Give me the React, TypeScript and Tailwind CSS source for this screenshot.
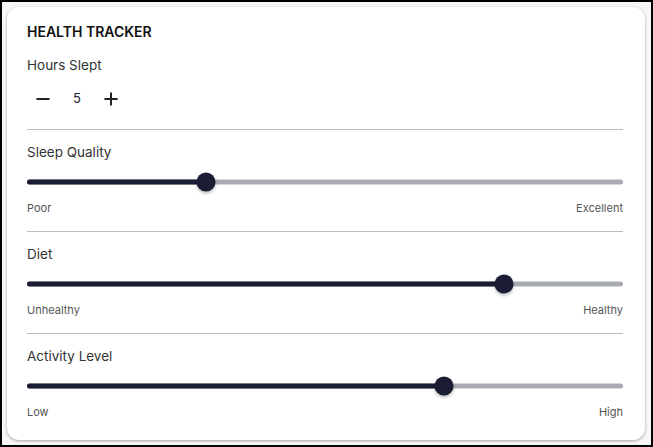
import React from 'react';
import { Minus, Plus } from 'lucide-react';

type SliderRow = {
  label: string;
  value: number;
  low: string;
  high: string;
};

const SLIDERS: SliderRow[] = [
  { label: 'Sleep Quality', value: 30, low: 'Poor', high: 'Excellent' },
  { label: 'Diet', value: 80, low: 'Unhealthy', high: 'Healthy' },
  { label: 'Activity Level', value: 70, low: 'Low', high: 'High' },
];

function Slider({ value }: { value: number }) {
  return (
    <div className="relative h-5 w-full">
      <div className="absolute left-0 right-0 top-1/2 h-[5px] -translate-y-1/2 rounded-full bg-[#a9abb2]" />
      <div
        className="absolute left-0 top-1/2 h-[5px] -translate-y-1/2 rounded-full bg-[#1b1d35]"
        style={{ width: `${value}%` }}
      />
      <div
        className="absolute top-1/2 h-[19px] w-[19px] -translate-x-1/2 -translate-y-1/2 rounded-full bg-[#1b1d35] shadow-[0_2px_3px_rgba(0,0,0,0.25)]"
        style={{ left: `${value}%` }}
      />
    </div>
  );
}

export default function App() {
  return (
    <div
      className="h-[447px] w-[653px] border-2 border-black bg-[#f7f7f7] px-[5px] pt-[5px]"
      style={{ fontFamily: 'Inter, "Noto Sans", sans-serif' }}
    >
      <div className="flex w-[638px] flex-col rounded-xl bg-white pb-[15px] pl-5 pr-[22px] pt-[15px] shadow-[0_1px_3px_rgba(0,0,0,0.35)]">
        <div className="h-5 text-[14px] font-semibold leading-5 text-[#111]">HEALTH TRACKER</div>
        <div className="mt-[13px] h-5 text-[13.5px] leading-5 text-[#333]">Hours Slept</div>
        <div className="mt-1 flex h-10 items-center">
          <button className="flex h-10 w-8 items-center justify-center text-[#222]">
            <Minus size={20} strokeWidth={2.4} />
          </button>
          <span className="w-9 text-center text-[13px] text-[#1b1d35]">5</span>
          <button className="flex h-10 w-8 items-center justify-center text-[#222]">
            <Plus size={20} strokeWidth={2.4} />
          </button>
        </div>
        {SLIDERS.map((s) => (
          <div key={s.label} className="flex flex-col">
            <div className="mt-[10px] h-px w-full bg-[#bdbdbd]" />
            <div className="mt-3 h-5 text-[13.5px] leading-5 text-[#333]">{s.label}</div>
            <div className="mt-[10px]">
              <Slider value={s.value} />
            </div>
            <div className="mt-2 flex h-4 items-center justify-between text-[11px] leading-4 text-[#555]">
              <span>{s.low}</span>
              <span>{s.high}</span>
            </div>
            <div className="h-[5px]" />
          </div>
        ))}
      </div>
    </div>
  );
}
